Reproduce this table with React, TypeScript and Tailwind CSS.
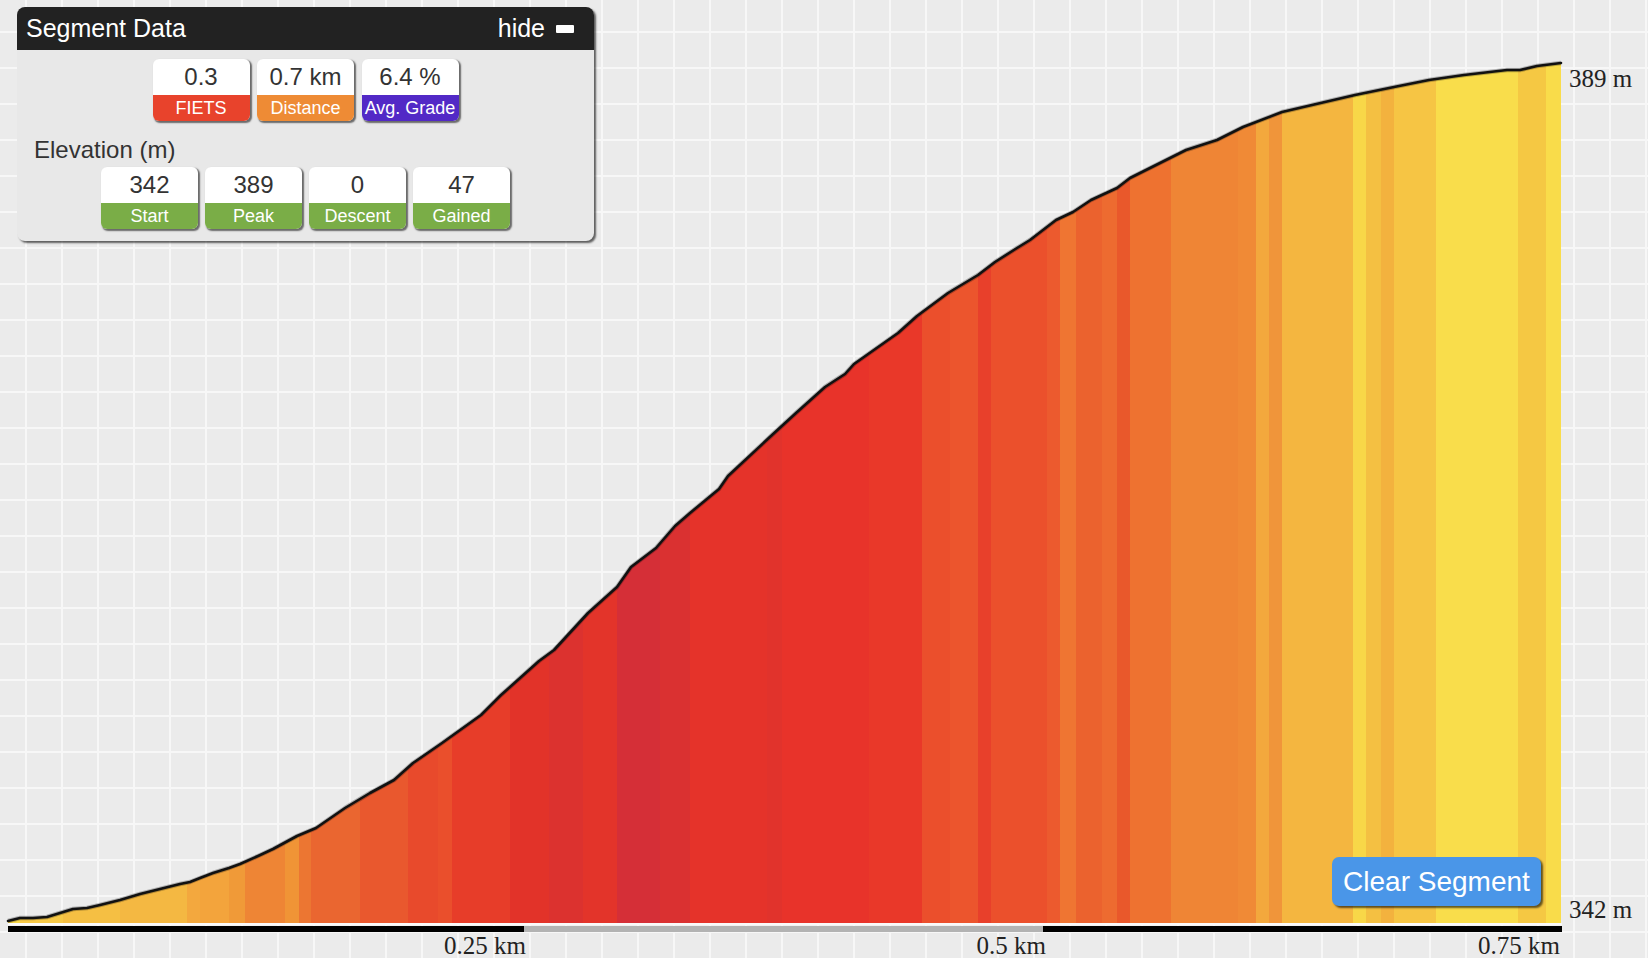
import React from 'react';

const BASE = 923;
const END = 1561;

// x start of each grade band and its colour
const bands: [number, string][] = [
  [8, '#f8d84a'], [20, '#f7c947'], [63, '#f5bf43'], [120, '#f4b842'], [187, '#f3a83e'],
  [200, '#f3a43c'], [229, '#f09a38'], [245, '#ee8535'], [285, '#f09436'], [299, '#ec7632'],
  [311, '#ea6630'], [360, '#e9582e'], [408, '#e84a2c'], [438, '#ea4f2c'], [452, '#e73d29'],
  [510, '#e23329'], [549, '#dc322f'], [583, '#e3342a'], [617, '#d52f37'], [660, '#da3131'],
  [690, '#e5332a'], [767, '#e1332c'], [782, '#e8332a'], [869, '#e93829'], [922, '#eb4f2c'],
  [950, '#ec552d'], [978, '#e8402b'], [991, '#eb502c'], [1047, '#ec5a2e'], [1060, '#ef7532'],
  [1076, '#eb622e'], [1102, '#ed6b30'], [1117, '#e9582b'], [1130, '#ee7230'], [1171, '#ef8535'],
  [1238, '#f08a36'], [1256, '#f3a83d'], [1269, '#f0953a'], [1282, '#f4b640'], [1353, '#f8d748'],
  [1366, '#f4c042'], [1381, '#f3b23e'], [1394, '#f6c544'], [1436, '#f9dd4b'], [1518, '#f5c843'],
  [1546, '#f9dc4a'],
];

const profile: [number, number][] = [
  [8, 921], [20, 918], [33, 918], [47, 917], [60, 913], [73, 909], [87, 908], [100, 905],
  [120, 900], [140, 894], [160, 889], [180, 884], [190, 882], [200, 878], [213, 873], [229, 868],
  [240, 864], [258, 856], [273, 849], [297, 836], [316, 828], [345, 808], [370, 793], [394, 780],
  [413, 763], [442, 743], [481, 715], [501, 695], [539, 661], [554, 650], [588, 613], [617, 587],
  [631, 567], [656, 548], [675, 526], [690, 513], [719, 489], [728, 476], [772, 435], [796, 413],
  [825, 387], [845, 374], [854, 364], [898, 333], [917, 316], [948, 293], [978, 275], [995, 262],
  [1017, 248], [1030, 240], [1056, 220], [1073, 212], [1091, 200], [1117, 188], [1130, 178],
  [1160, 163], [1186, 150], [1217, 140], [1243, 127], [1282, 112], [1312, 105], [1355, 95],
  [1394, 87], [1429, 80], [1464, 75], [1507, 70], [1520, 70], [1537, 66], [1561, 63],
];

const linePts = profile.map(([x, y]) => `${x},${y}`).join(' ');
const areaPts = `${linePts} ${END},${BASE} 8,${BASE}`;

function Badge({ value, label, color }: { value: string; label: string; color: string }) {
  return (
    <div className="w-[97px] overflow-hidden rounded-[6px] bg-white shadow-[1.5px_1.5px_1.5px_rgba(0,0,0,0.55)]">
      <div className="h-[36px] text-center text-[24px] leading-[36px] text-[#333]">{value}</div>
      <div className={`h-[26px] text-center text-[18px] leading-[26px] text-white ${color}`}>{label}</div>
    </div>
  );
}

function ElevationChart() {
  const serif = '"Liberation Serif", "Times New Roman", serif';
  return (
    <svg width={1648} height={958} className="block">
      <defs>
        <clipPath id="area">
          <polygon points={areaPts} />
        </clipPath>
      </defs>
      <g clipPath="url(#area)">
        {bands.map(([x, c], i) => {
          const next = i + 1 < bands.length ? bands[i + 1][0] : END;
          return <rect key={x} x={x} y={40} width={next - x + 0.5} height={BASE - 40} fill={c} />;
        })}
      </g>
      <polyline points={linePts} fill="none" stroke="#000" strokeOpacity={0.25} strokeWidth={4.5} strokeLinejoin="round" />
      <polyline points={linePts} fill="none" stroke="#111" strokeWidth={2.6} strokeLinejoin="round" strokeLinecap="round" />

      {/* distance bar */}
      <rect x={8} y={923} width={1554} height={2.5} fill="#fafafa" />
      <rect x={8} y={926} width={516} height={6} fill="#000" />
      <rect x={524} y={926} width={519} height={6} fill="#b3b3b3" />
      <rect x={1043} y={926} width={519} height={6} fill="#000" />

      <g fontFamily={serif} fontSize={25} fill="#222">
        <text x={1569} y={87}>389 m</text>
        <text x={1569} y={918}>342 m</text>
        <text x={526} y={954} textAnchor="end">0.25 km</text>
        <text x={1046} y={954} textAnchor="end">0.5 km</text>
        <text x={1560} y={954} textAnchor="end">0.75 km</text>
      </g>
    </svg>
  );
}

export default function App() {
  return (
    <div className="relative h-[958px] w-[1648px] overflow-hidden bg-[#ebebeb] bg-[linear-gradient(to_right,#f7f7f7_2px,transparent_2px),linear-gradient(to_bottom,#f7f7f7_2px,transparent_2px)] bg-[length:36px_36px] bg-[position:25px_31px] font-['Liberation_Sans',Arial,sans-serif]">
      <ElevationChart />

      <div className="absolute left-[17px] top-[7px] h-[234px] w-[577px] rounded-[8px] bg-[#e8e8e8] shadow-[2px_2px_2px_rgba(0,0,0,0.6)]">
        <div className="flex h-[43px] items-center justify-between rounded-t-[8px] bg-[#222] pl-[9px] pr-[20px] pt-[1px] text-white">
          <span className="text-[25px]">Segment Data</span>
          <span className="flex items-center gap-[11px] text-[25px]">
            hide
            <span className="h-[8px] w-[18px] rounded-[1px] bg-white" />
          </span>
        </div>
        <div className="mt-[9px] flex justify-center gap-[7.5px]">
          <Badge value="0.3" label="FIETS" color="bg-[#e8432c]" />
          <Badge value="0.7 km" label="Distance" color="bg-[#ee8b35]" />
          <Badge value="6.4 %" label="Avg. Grade" color="bg-[#5229c6]" />
        </div>
        <div className="mt-[15px] pl-[17px] text-[24px] leading-[28px] text-[#333]">Elevation (m)</div>
        <div className="mt-[3px] flex justify-center gap-[7px]">
          <Badge value="342" label="Start" color="bg-[#7aad47]" />
          <Badge value="389" label="Peak" color="bg-[#7aad47]" />
          <Badge value="0" label="Descent" color="bg-[#7aad47]" />
          <Badge value="47" label="Gained" color="bg-[#7aad47]" />
        </div>
      </div>

      <button className="absolute left-[1332px] top-[857px] h-[49px] w-[209px] rounded-[7px] bg-[#4a96e8] text-[28px] text-white shadow-[2px_2px_2px_rgba(0,0,0,0.6)]">
        Clear Segment
      </button>
    </div>
  );
}
